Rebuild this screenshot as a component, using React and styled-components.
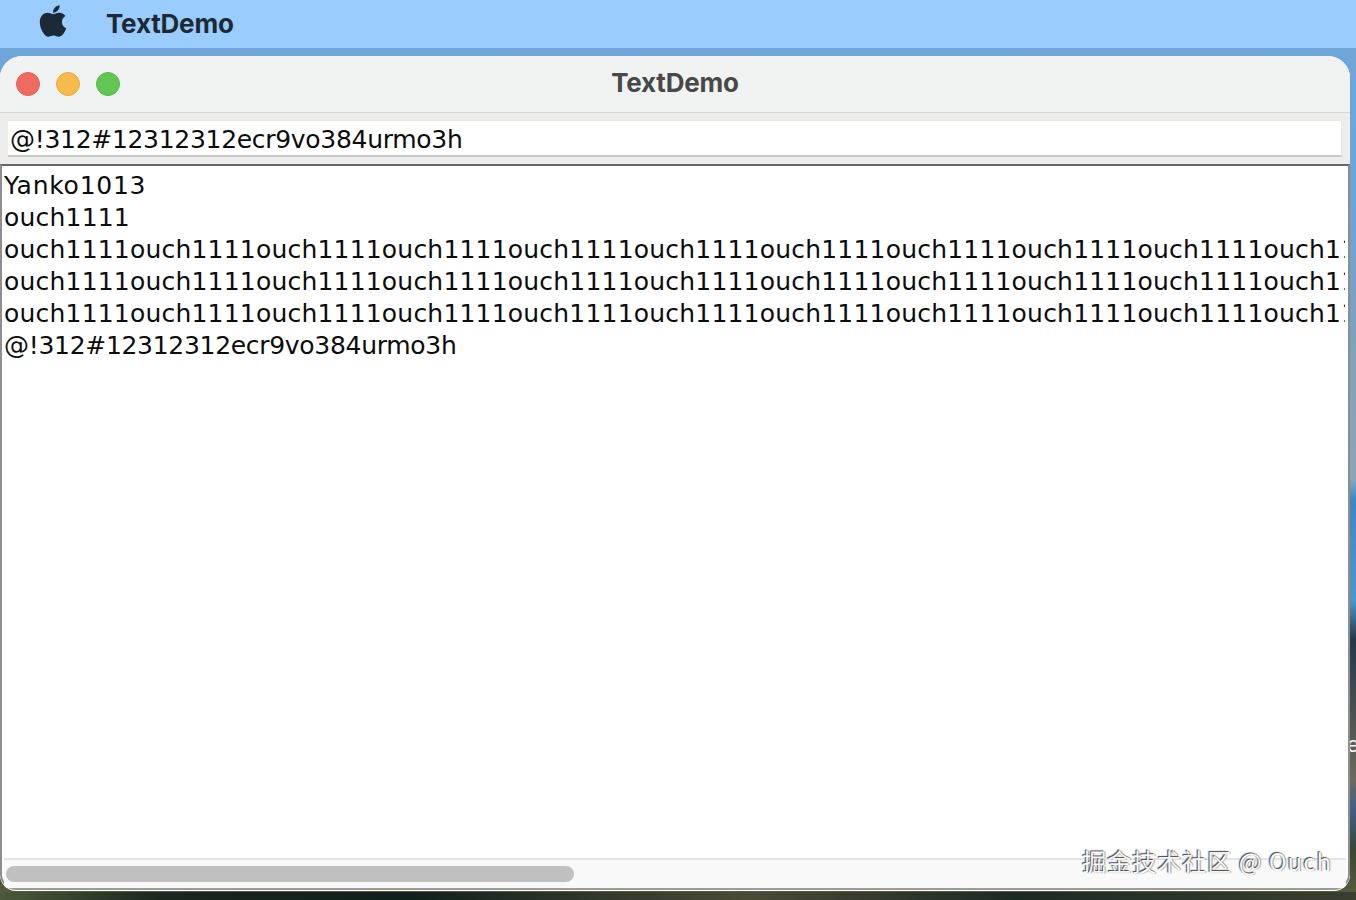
import React from "react";
import styled, { createGlobalStyle } from "styled-components";
import { FaApple } from "react-icons/fa";

const Global = createGlobalStyle`
  html, body { margin: 0; padding: 0; background: #1d2a20; }
  * { box-sizing: border-box; }
`;

const Desktop = styled.div`
  position: relative;
  width: 1356px;
  height: 900px;
  overflow: hidden;
  background:
    linear-gradient(90deg, #4c5a3a 0%, #1a261f 12%, #10201c 30%, #4a4a38 55%, #1c2a24 75%, #3a3f30 100%) 0 892px / 100% 8px no-repeat,
    linear-gradient(180deg,
      #6fa6da 0, #6fa4d6 190px, #7ba2c0 320px, #8aa6b4 480px, #3f87bd 500px, #4d98c8 600px,
      #26384a 640px, #6c6a5a 780px, #3f5f88 810px, #3a4638 850px, #5a5e3a 900px);
`;

const MenuBar = styled.header`
  height: 48px;
  display: flex;
  align-items: center;
  padding-left: 35px;
  gap: 35px;
  background: #9accfd;
  color: #1b2a36;
  svg { display: block; margin-top: -6px; }
`;

const AppName = styled.span`
  font: 700 26px/44px Inter, "Noto Sans", sans-serif;
  letter-spacing: -0.2px;
`;

const Window = styled.section`
  position: relative;
  width: 1350px;
  height: 835px;
  margin-top: 8px;
  display: flex;
  flex-direction: column;
  background: #fff;
  border-radius: 22px 22px 16px 16px;
  overflow: hidden;
`;

const TitleBar = styled.div`
  position: relative;
  height: 57px;
  flex: none;
  display: flex;
  align-items: center;
  justify-content: center;
  padding-bottom: 3px;
  background: #f1f3f2;
  border-bottom: 1px solid #d6d6d6;
`;

const Lights = styled.div`
  position: absolute;
  left: 16px;
  top: 16px;
  display: flex;
  gap: 16px;
`;

const Light = styled.span`
  width: 24px;
  height: 24px;
  border-radius: 50%;
  background: ${(p) => p.$fill};
  border: 1px solid ${(p) => p.$edge};
`;

const Title = styled.h1`
  margin: 0;
  font: 700 26px/1 Inter, "Noto Sans", sans-serif;
  letter-spacing: -0.2px;
  color: #484848;
`;

const FieldBar = styled.div`
  flex: none;
  height: 51px;
  padding: 7px 8px 7px;
  background: #ededec;
`;

const Field = styled.div`
  height: 37px;
  padding-left: 2px;
  background: #fff;
  border-top: 1px solid #e6e6e6;
  border-right: 1px solid #e6e6e6;
  border-bottom: 2px solid #c9c9c9;
  font: 25px/37px "DejaVu Sans", sans-serif;
  letter-spacing: -0.3px;
  color: #0c0c0c;
  white-space: nowrap;
`;

const Pane = styled.div`
  flex: 1;
  min-height: 0;
  margin-bottom: 1px;
  display: flex;
  flex-direction: column;
  border-style: solid;
  border-width: 2px;
  border-color: #666 #8e8e8e #9b9b9b #8e8e8e;
  border-radius: 0 0 16px 16px;
  background: #fff;
`;

const TextArea = styled.div`
  flex: 1;
  min-height: 0;
  margin-right: 3px;
  padding: 4px 0 0 2px;
  overflow: hidden;
`;

const Line = styled.div`
  height: 32px;
  font: 25px/32px "DejaVu Sans", sans-serif;
  letter-spacing: ${(p) => p.$spacing}px;
  color: #0c0c0c;
  white-space: nowrap;
`;

const ScrollTrack = styled.div`
  flex: none;
  height: 30px;
  margin: 0 2px;
  padding: 6px 0 6px 2px;
  background: #f9f9f9;
  border-top: 2px solid #e4e4e4;
`;

const ScrollThumb = styled.div`
  width: 568px;
  height: 16px;
  border-radius: 8px;
  background: #c0c0c0;
`;

const Watermark = styled.div`
  position: absolute;
  right: 18px;
  bottom: 15px;
  font: 24px/30px "Noto Sans CJK SC", "Noto Sans", sans-serif;
  letter-spacing: 1px;
  color: rgba(255, 255, 255, 0.95);
  text-shadow: -1px -1px 1px #444, 1px 0 1px #999;
  white-space: nowrap;
`;

const DesktopLabel = styled.span`
  position: absolute;
  left: 1347px;
  top: 733px;
  font: 22px/24px "Liberation Sans", sans-serif;
  color: #f4f4f4;
`;

const repeated = "ouch1111".repeat(12);

export default function App() {
  return (
    <Desktop>
      <Global />
      <DesktopLabel>e</DesktopLabel>
      <MenuBar>
        <FaApple size={36} />
        <AppName>TextDemo</AppName>
      </MenuBar>
      <Window>
        <TitleBar>
          <Lights>
            <Light $fill="#ef6a60" $edge="#e25f55" />
            <Light $fill="#f6bb4d" $edge="#e6a93e" />
            <Light $fill="#62c554" $edge="#56b849" />
          </Lights>
          <Title>TextDemo</Title>
        </TitleBar>
        <FieldBar>
          <Field>@!312#12312312ecr9vo384urmo3h</Field>
        </FieldBar>
        <Pane>
          <TextArea>
            <Line $spacing={0.75}>Yanko1013</Line>
            <Line $spacing={0.2}>ouch1111</Line>
            <Line $spacing={0.2}>{repeated}</Line>
            <Line $spacing={0.2}>{repeated}</Line>
            <Line $spacing={0.2}>{repeated}</Line>
            <Line $spacing={-0.3}>@!312#12312312ecr9vo384urmo3h</Line>
          </TextArea>
          <ScrollTrack>
            <ScrollThumb />
          </ScrollTrack>
        </Pane>
        <Watermark>掘金技术社区 @ Ouch</Watermark>
      </Window>
    </Desktop>
  );
}
